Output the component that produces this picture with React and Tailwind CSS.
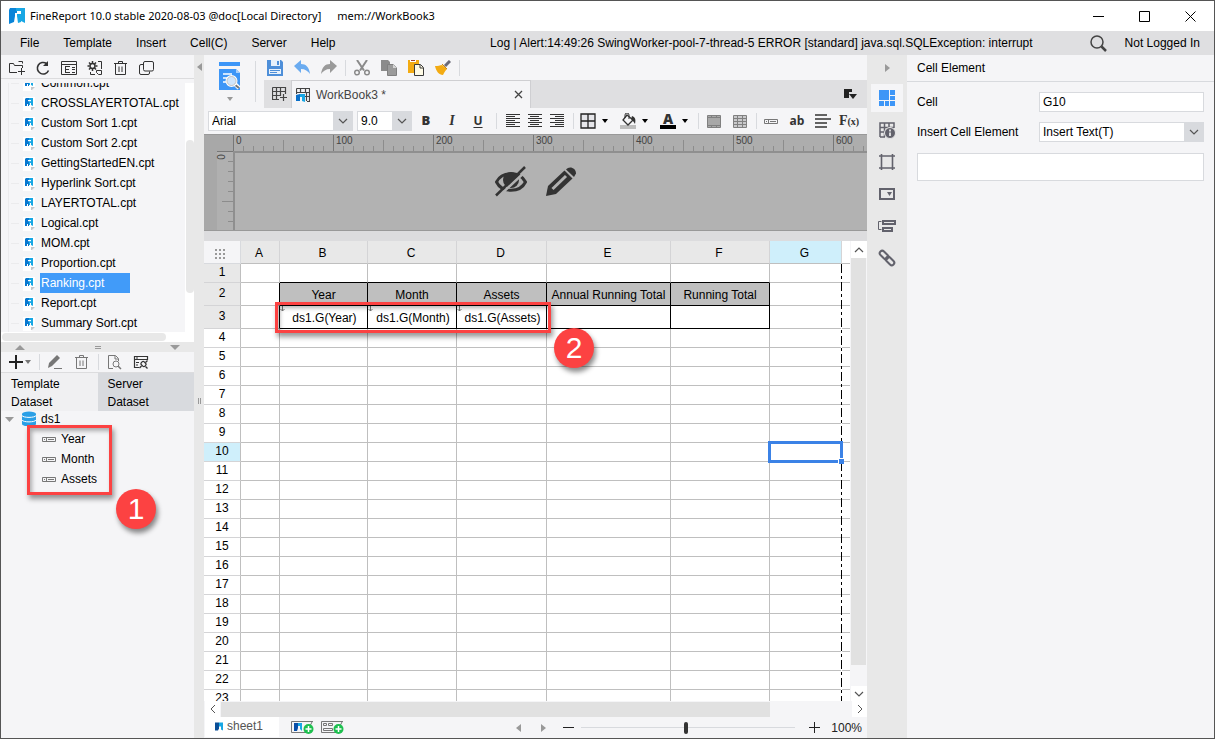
import React, { useState } from 'react'
import clsx from 'clsx'

const files = [
  'Common.cpt', 'CROSSLAYERTOTAL.cpt', 'Custom Sort 1.cpt', 'Custom Sort 2.cpt', 'GettingStartedEN.cpt',
  'Hyperlink Sort.cpt', 'LAYERTOTAL.cpt', 'Logical.cpt', 'MOM.cpt', 'Proportion.cpt', 'Ranking.cpt',
  'Report.cpt', 'Summary Sort.cpt',
]

const menus = ['File', 'Template', 'Insert', 'Cell(C)', 'Server', 'Help']
const columns = ['A', 'B', 'C', 'D', 'E', 'F', 'G']
const rows = Array.from({ length: 23 }, (_, i) => i + 1)

const cells = {
  B2: 'Year', C2: 'Month', D2: 'Assets', E2: 'Annual Running Total', F2: 'Running Total',
  B3: 'ds1.G(Year)', C3: 'ds1.G(Month)', D3: 'ds1.G(Assets)',
}

function Icon({ size = 16, label, className, children }) {
  return (
    <svg
      width={size}
      height={size}
      viewBox={`0 0 ${size} ${size}`}
      fill="none"
      stroke="currentColor"
      className={clsx('shrink-0', className)}
      role={label ? 'img' : undefined}
      aria-label={label}
      aria-hidden={label ? undefined : true}
    >
      {children}
    </svg>
  )
}

function IconButton({ label, className, children }) {
  return (
    <button type="button" aria-label={label} className={clsx('flex shrink-0 items-center', className)}>
      {children}
    </button>
  )
}

/* ---------- icons ---------- */

const Logo = () => (
  <Icon size={18}>
    <path d="M2 1h7v5H7v3l-1 6-5 2V3z" fill="#0a84d8" stroke="none" />
    <path d="M8 1h9v15l-4-2V9H9V7h4V4H8z" fill="#18a7e4" stroke="none" />
    <path d="M9 4h4v3H9z" fill="#fff" stroke="none" />
    <path d="M9 9h4v6l-3 1z" fill="#18a7e4" stroke="none" />
  </Icon>
)
const FileIcon = () => (
  <svg width="12" height="14" viewBox="0 0 12 14" className="mt-0.5 shrink-0" aria-hidden="true">
    <path d="M0 0h12v10l-4 4H0z" fill="#fff" />
    <path d="M12 10l-3 3H8v-3z" fill="#c4c6ca" />
    <path d="M3 1h3v8H5V7H4v2H2V2z" fill="#0878d0" />
    <path d="M6 1h4v8L8 8V6H7v2H6z" fill="#18a7e4" />
    <path d="M5 3h3v1.200H5z" fill="#fff" />
  </svg>
)
const FolderPlus = () => (
  <Icon>
    <path d="M8 12.500H.5v-9h4l1 2h8V8M9.500 1.500h4v2M12.500 8v7M9 11.500h7" />
  </Icon>
)
const Refresh = () => (
  <Icon>
    <path d="M13.500 10.500A5.800 5.800 0 1 1 11.500 3.500" strokeWidth="1.600" />
    <path d="M13 1v5H8z" fill="currentColor" stroke="none" />
  </Icon>
)
const Layout = () => (
  <Icon>
    <path d="M.5 1.500h15v13H.5zM.5 4.500h15M4.500 6v7M5 6.500h4M5 9.500h3M5 12.500h4M11 7.500h3M11 9.500h3M11 12.500h3" />
  </Icon>
)
const GearCopy = () => (
  <Icon>
    <circle cx="5.500" cy="6" r="2.500" strokeWidth="1.500" />
    <path d="M5.500 1v2M5.500 9v2M.5 6h2M8.500 6h2M2 2.500l1.500 1.500M7.500 8L9 9.500M9 2.500L7.500 4M3.500 8L2 9.500" strokeWidth="1.500" />
    <path d="M11 1.500h3.500V9M3.500 12v2.500H8M9.500 10.500h5v4h-3l-2-2z" />
  </Icon>
)
const Trash = () => (
  <Icon>
    <path d="M1 3.500h13M5.500 3V1.500h4V3M2.500 4v10.500h10V4M6 6.500v5.500M9 6.500v5.500" />
  </Icon>
)
const Copy = () => (
  <Icon>
    <rect x="4.500" y="1.500" width="10" height="9.500" rx="1.500" />
    <path d="M4 4.500H2A1.500 1.500 0 0 0 .5 6v7A1.500 1.500 0 0 0 2 14.500h7a1.500 1.500 0 0 0 1.500-1.500v-1.500" />
  </Icon>
)
const Preview = () => (
  <svg width="22" height="29" viewBox="0 0 22 29" aria-hidden="true">
    <path d="M0 0h21v4H0z" fill="#3d96f7" />
    <path d="M0 7h17l4 4v17H0z" fill="#3d96f7" />
    <path d="M17 7v4h4z" fill="#a9d0fb" />
    <path d="M4 12h9M4 16h4M4 20h3" stroke="#fff" strokeWidth="1.500" />
    <path d="M16 22l4 4" stroke="#fff" strokeWidth="4" />
    <path d="M15 22l5 4" stroke="#777" strokeWidth="2" />
    <circle cx="12.500" cy="19" r="5" fill="#cfe5fc" stroke="#fff" strokeWidth="2" />
    <circle cx="12.500" cy="19" r="4.500" fill="none" stroke="#999" strokeWidth=".6" />
  </svg>
)
const Save = () => (
  <Icon>
    <path d="M0 0h14l2 2v14H0z" fill="#4e8fd9" stroke="none" />
    <path d="M4 0h9v6H4z" fill="#e8f1fb" stroke="none" />
    <path d="M10 1h2v4h-2z" fill="#4e8fd9" stroke="none" />
    <path d="M2 9h12v5H2z" fill="#e8f1fb" stroke="none" />
    <path d="M3 10.500h10M3 12.500h7" stroke="#4e8fd9" />
  </Icon>
)
const Undo = () => (
  <Icon className="text-[#6aabf0]">
    <path d="M0 6l7-6v4c5 0 8 3 9 10-2-3-5-5-9-5v4z" fill="currentColor" stroke="none" />
  </Icon>
)
const Redo = () => (
  <Icon className="text-[#9a9a9a]">
    <path d="M16 6L9 0v4C4 4 1 7 0 14c2-3 5-5 9-5v4z" fill="currentColor" stroke="none" />
  </Icon>
)
const Cut = () => (
  <Icon className="text-[#8a8a8a]">
    <path d="M3 0l7 10.500M13 0L6 10.500" strokeWidth="2" />
    <circle cx="3" cy="12.500" r="2.300" strokeWidth="1.500" />
    <circle cx="13" cy="12.500" r="2.300" strokeWidth="1.500" />
  </Icon>
)
const CopyFill = () => (
  <Icon>
    <path d="M0 0h7l2 2v9H0z" fill="#8b8b8b" stroke="none" />
    <path d="M6.500 4.500h6l3 3v8h-9z" fill="#9b9b9b" stroke="#808080" />
    <path d="M12 4v4h4z" fill="#d5d5d5" stroke="none" />
  </Icon>
)
const Paste = () => (
  <Icon>
    <path d="M0 0h11v13H0z" fill="#f3ab12" stroke="none" />
    <path d="M2 0h6v2H2z" fill="#fff" stroke="none" />
    <path d="M3 0h4v1H3z" fill="#a04030" stroke="none" />
    <path d="M6.500 4.500h6l3 3v8h-9z" fill="#fffbe6" stroke="#3b3b3b" />
    <path d="M12 5v3h3" stroke="#3b3b3b" />
  </Icon>
)
const Brush = () => (
  <Icon>
    <path d="M15 1l-5 5" stroke="#6a6a78" strokeWidth="3" />
    <path d="M0 6c3 0 5-.5 7-1l5 4c-2 2-3 4-4 6-4 0-7-4-8-9z" fill="#f3ab12" stroke="none" />
    <path d="M7 4l5 5" stroke="#c98412" />
  </Icon>
)
const GridPlus = () => (
  <Icon>
    <path d="M.5 1.500h13V8M.5 1.500v12H7M0 5.500h13.500M0 9.500h8M4.500 1v12.500M8.500 1v9M11.500 8v7M8 11.500h7" strokeWidth="1.200" />
  </Icon>
)
const GridLogo = () => (
  <Icon size={14}>
    <path d="M.5.5h13v13H11M.5.5V6M0 4.500h13.500M9 8.500h4.500M4.500 0v5M9.500 0v5M10.500 5v8" strokeWidth="1.200" />
    <path d="M0 7l4-1v7H0z" fill="#0a6fc8" stroke="none" />
    <path d="M4 6h5v8l-3-1V9H4z" fill="#18a7e4" stroke="none" />
  </Icon>
)
const Align = ({ side }) => (
  <Icon size={14} className="text-[#333]">
    {[1, 3, 5, 7, 9, 11, 13].map((y, i) => {
      const w = i % 2 ? 9 : 14
      const x = side === 'left' ? 0 : side === 'right' ? 14 - w : Math.floor((14 - w) / 2)
      return <path key={y} d={`M${x} ${y - 0.5}h${w}`} />
    })}
  </Icon>
)
const Borders = () => (
  <Icon className="text-[#222]">
    <path d="M1 1h14v14H1zM8 1v14M1 8h14" strokeWidth="1.300" fill="#e6e6ea" />
  </Icon>
)
const FillColor = () => (
  <Icon className="text-[#333]">
    <path d="M0 12h16v4H0z" fill="#bdbdbd" stroke="none" />
    <path d="M7 2l6 5-5 5-5-5z" fill="#f5f5f7" strokeWidth="1.300" />
    <path d="M5 5V2a2 2 0 0 1 4 0v4" />
    <path d="M12 3c3 1 4 3 3 8-1-2-2-3-4-5z" fill="currentColor" stroke="none" />
  </Icon>
)
const Merge = ({ split }) => (
  <Icon size={14} className="text-[#808080]">
    <path d="M.5 1.500h13v12H.5z" fill={split ? '#c9c9cb' : '#a8a8a8'} />
    <path d={split ? 'M.5 4.500h13M.5 7.500h13M.5 10.500h13M4.500 1v12M9.500 1v12' : 'M.5 3.500h13M.5 11.500h13M4.500 1v3M9.500 1v3M4.500 11v3M9.500 11v3'} />
  </Icon>
)
const Field = ({ className }) => (
  <svg width="14" height="7" viewBox="0 0 14 7" fill="none" stroke="#777" className={clsx('shrink-0', className)} aria-hidden="true">
    <path d="M.5 1.500h13v4H.5zM4.500 1v5M6 3.500h6M2 3.500h1" />
  </svg>
)
const Caret = ({ className }) => (
  <svg width="6" height="4" viewBox="0 0 6 4" className={clsx('shrink-0', className)} aria-hidden="true">
    <path d="M0 0h6L3 4z" fill="currentColor" />
  </svg>
)
const Chevron = ({ d = 'M1 1l4 4 4-4', className }) => (
  <svg width="10" height="6" viewBox="0 0 10 6" fill="none" stroke="#555" strokeWidth="1.200" className={className} aria-hidden="true">
    <path d={d} />
  </svg>
)
const Side = ({ dir }) => (
  <svg width="5" height="8" viewBox="0 0 5 8" aria-hidden="true">
    <path d={dir === 'left' ? 'M5 0v8L0 4z' : 'M0 0v8l5-4z'} fill="#999" />
  </svg>
)

const railIcons = [
  { label: 'Cell Element', art: <path d="M0 0h10v10H0zM11 0h5v5h-5zM11 6h5v4h-5zM0 11h5v5H0zM6 11h4v5H6zM11 11h5v5h-5z" fill="#3d96f7" stroke="none" /> },
  {
    label: 'Cell Attributes',
    art: (
      <>
        <path d="M1 15V1h14v5M1 5.500h14M1 10h5M5.500 1v14M10 1v5M1 15h5" strokeWidth="1.500" />
        <circle cx="11" cy="11" r="5.500" fill="#62626c" stroke="#e8e8e8" />
        <path d="M11 7.500v2M11 10.500V14" stroke="#fff" strokeWidth="1.500" />
      </>
    ),
  },
  { label: 'Float Element', art: <path d="M2.500 0v16M13.500 0v16M0 2h16M0 14h16" strokeWidth="1.600" /> },
  {
    label: 'Widget Settings',
    art: (
      <>
        <path d="M1 3h14v10H1z" strokeWidth="2" />
        <path d="M8 6h5l-2.500 4z" fill="#62626c" stroke="none" />
      </>
    ),
  },
  {
    label: 'Condition Attributes',
    art: (
      <>
        <path d="M2.500 3.500h-3v8h3" />
        <path d="M4 3h12v3H4zM4 10h9v3H4z" strokeWidth="2" />
      </>
    ),
  },
  {
    label: 'Hyperlink',
    art: (
      <>
        <rect x="0" y="2.500" width="10" height="5" rx="2.500" transform="rotate(45 5 5)" strokeWidth="2" />
        <rect x="6" y="8.500" width="10" height="5" rx="2.500" transform="rotate(45 11 11)" strokeWidth="2" />
      </>
    ),
  },
]

/* ---------- small controls ---------- */

function Combo({ id, label, value, className, options }) {
  return (
    <div className={clsx('relative h-5 shrink-0', className)}>
      <select
        id={id}
        aria-label={label}
        defaultValue={value}
        className="block h-5 w-full appearance-none rounded-none border border-[#d8dade] bg-white pl-[3px] pr-5 outline-none"
      >
        {options.map(o => <option key={o}>{o}</option>)}
      </select>
      <span className="pointer-events-none absolute inset-y-0 right-0 flex w-5 items-center justify-center bg-[#d8dade]">
        <Chevron />
      </span>
    </div>
  )
}

const Divider = ({ className }) => <span className={clsx('w-px shrink-0 bg-[#d8dade]', className)} />

function Callout({ className, children }) {
  return (
    <span className={clsx('absolute z-20 flex size-10 items-center justify-center rounded-full bg-[#fc4242] text-[30px] leading-none text-white shadow-[2px_4px_5px_rgba(0,0,0,0.45)]', className)}>
      {children}
    </span>
  )
}

const Highlight = ({ className }) => (
  <span className={clsx('pointer-events-none absolute z-10 border-3 border-[#fc4242] shadow-[2px_4px_5px_rgba(0,0,0,0.4),inset_2px_3px_4px_rgba(0,0,0,0.3)]', className)} />
)

/* ---------- left side ---------- */

function TemplateTree() {
  const [selected, setSelected] = useState('Ranking.cpt')

  return (
    <div className="mt-1 flex h-[249px] shrink-0 overflow-hidden">
      <ul className="-mt-2.5 ml-[7px] min-w-0 flex-1 border-l border-[#ebebed]">
        {files.map(name => (
          <li key={name} className="flex h-5 items-center">
            <span className="ml-0.5 mr-1 h-px w-2 bg-[#ebebed]" />
            <FileIcon />
            <button
              type="button"
              onClick={() => setSelected(name)}
              className={clsx('ml-[5px] h-5 whitespace-nowrap pl-px text-left', name === selected && 'w-[90px] bg-[#419bf9] text-white')}
            >
              {name}
            </button>
          </li>
        ))}
      </ul>
      <div className="w-[9px] shrink-0 bg-white pt-[57px]">
        <div className="ml-px h-[153px] rounded bg-[#e8e8e8]" />
      </div>
    </div>
  )
}

function Sidebar() {
  return (
    <aside className="flex w-[193px] shrink-0 flex-col bg-[#f5f5f7]">
      <div className="flex h-6 shrink-0 items-center gap-2.5 border-b border-[#dcdcde] pl-2 pt-0.5 text-[#333]">
        <IconButton label="New folder"><FolderPlus /></IconButton>
        <IconButton label="Refresh"><Refresh /></IconButton>
        <IconButton label="Show in explorer"><Layout /></IconButton>
        <IconButton label="Rename"><GearCopy /></IconButton>
        <IconButton label="Delete"><Trash /></IconButton>
        <IconButton label="Copy"><Copy /></IconButton>
      </div>

      <TemplateTree />
      <div className="flex h-2.5 shrink-0 bg-white pr-[9px] pt-px">
        <div className="mx-px h-2 w-[164px] rounded bg-[#e8e8e8]" />
      </div>

      <div className="flex h-2.5 shrink-0 items-center justify-between bg-[#e8e8e8] px-3.5 text-[#999]">
        <svg width="10" height="5" viewBox="0 0 10 5" aria-hidden="true"><path d="M0 5h10L5 0z" fill="currentColor" /></svg>
        <span className="h-[3px] w-1.5 border-y border-[#999]" />
        <svg width="10" height="5" viewBox="0 0 10 5" aria-hidden="true"><path d="M0 0h10L5 5z" fill="currentColor" /></svg>
      </div>

      <div className="flex h-[21px] shrink-0 items-center border-b border-[#dcdcde] pl-2 text-[#777]">
        <IconButton label="Add dataset" className="gap-0.5">
          <Icon size={14} className="text-[#222]"><path d="M7 0v14M0 7h14" strokeWidth="2" /></Icon>
          <Caret />
        </IconButton>
        <Divider className="ml-2 mr-2 h-4" />
        <IconButton label="Edit">
          <Icon><path d="M0 14l1-5 8-8 3 3-8 8z" fill="currentColor" stroke="none" /><path d="M6 14.500h8" /></Icon>
        </IconButton>
        <IconButton label="Remove" className="ml-2.5"><Trash /></IconButton>
        <Divider className="mx-2 h-4" />
        <IconButton label="Preview">
          <Icon>
            <path d="M6 14.500H1.500v-13h7l3 3V7M8 2v3h3" />
            <circle cx="9" cy="10" r="3" />
            <path d="M11 12l3 3" strokeWidth="1.500" />
          </Icon>
        </IconButton>
        <IconButton label="Connection" className="ml-2.5 text-[#333]">
          <Icon>
            <path d="M6 13.500H1.500v-11h13V6M1 5.500h13M3 8.500h3M3 11h2M3 4h2" strokeWidth="1.200" />
            <rect x="8" y="8" width="5" height="4" rx="1.500" transform="rotate(45 10.500 10)" strokeWidth="1.300" />
            <path d="M12.500 8.500l2-2M6.500 14l2-2M12.500 12.500l2 2" strokeWidth="1.300" />
          </Icon>
        </IconButton>
      </div>

      <div className="grid h-9 shrink-0 grid-cols-2 leading-[18px]">
        <button type="button" className="bg-[#f0f0f2] pl-2.5 pr-6 pt-0.5 text-left">Template Dataset</button>
        <button type="button" className="bg-[#d8dade] pl-2.5 pr-6 pt-0.5 text-left">Server Dataset</button>
      </div>

      <div className="relative flex-1">
        <ul>
          <li className="flex h-5 items-center pl-1">
            <svg width="9" height="5" viewBox="0 0 9 5" aria-hidden="true"><path d="M0 0h9L4.500 5z" fill="#999" /></svg>
            <Icon className="ml-[7px]">
              <path d="M1 3v10c0 3 14 3 14 0V3z" fill="#2b9fe6" stroke="none" />
              <ellipse cx="8" cy="3" rx="7" ry="2.500" fill="#2b9fe6" stroke="none" />
              <path d="M1 4.500c1 2.500 13 2.500 14 0M1 9c1 2.500 13 2.500 14 0" stroke="#fff" />
            </Icon>
            <span className="ml-1">ds1</span>
          </li>
          {['Year', 'Month', 'Assets'].map(f => (
            <li key={f} className="flex h-5 items-center gap-[5px] pl-[41px]">
              <Field />
              <span>{f}</span>
            </li>
          ))}
        </ul>
        <Highlight className="left-[26px] top-4 h-[70px] w-[85px]" />
        <Callout className="left-[115px] top-20">1</Callout>
      </div>
    </aside>
  )
}

/* ---------- centre ---------- */

function Toolbars() {
  return (
    <>
      <div className="flex h-[53px] shrink-0 bg-[#f5f5f7]">
        <button type="button" aria-label="Preview" className="flex w-[51px] shrink-0 flex-col items-center gap-1.5 pt-[7px] text-[#999]">
          <Preview />
          <Caret />
        </button>
        <Divider className="mr-2 mt-1.5 h-[41px]" />
        <div className="flex min-w-0 flex-1 flex-col">
          <div className="flex h-[25px] items-center gap-2 pl-[3px]">
            <div className="flex gap-[11px]">
              <IconButton label="Save"><Save /></IconButton>
              <IconButton label="Undo"><Undo /></IconButton>
              <IconButton label="Redo"><Redo /></IconButton>
            </div>
            <Divider className="h-4" />
            <div className="flex gap-[11px]">
              <IconButton label="Cut"><Cut /></IconButton>
              <IconButton label="Copy"><CopyFill /></IconButton>
              <IconButton label="Paste"><Paste /></IconButton>
              <IconButton label="Format painter"><Brush /></IconButton>
            </div>
            <Divider className="h-4" />
          </div>
          <div className="flex h-7 bg-[#dfdfe1] text-[#444]">
            <IconButton label="New template" className="w-[27px] pl-2"><GridPlus /></IconButton>
            <div className="flex w-60 items-center border-x border-t border-[#cfcfd2] bg-[#f5f5f7] pl-1 pr-[7px]">
              <GridLogo />
              <span className="ml-1.5 flex-1">WorkBook3 *</span>
              <IconButton label="Close tab">
                <Icon size={9}><path d="M1 1l7 7M8 1L1 8" strokeWidth="1.300" /></Icon>
              </IconButton>
            </div>
            <IconButton label="Tab list" className="ml-auto mr-2.5 text-[#222]">
              <Icon size={13}>
                <path d="M0 1h8v3H5v6H0z" fill="currentColor" stroke="none" />
                <path d="M5 6h8l-4 5z" fill="currentColor" stroke="none" />
              </Icon>
            </IconButton>
          </div>
        </div>
      </div>

      <div className="flex h-[26px] shrink-0 items-center bg-[#f5f5f7] pl-1 text-[#333]">
        <Combo label="Font family" value="Arial" options={['Arial', 'Tahoma', 'Verdana']} className="w-[145px] text-black" />
        <Combo label="Font size" value="9.0" options={['8.0', '9.0', '10.0', '11.0']} className="ml-1 w-[55px] text-black" />
        <div className="ml-px flex">
          <button type="button" className="w-[26px] font-['Open_Sans'] text-[13px] font-extrabold">B</button>
          <button type="button" className="w-[26px] font-['Liberation_Serif'] text-sm font-bold italic">I</button>
          <button type="button" className="w-[26px] font-['Open_Sans'] text-xs font-bold underline underline-offset-2">U</button>
        </div>
        <Divider className="mx-[5px] h-4" />
        <IconButton label="Align left" className="w-[22px] justify-center"><Align side="left" /></IconButton>
        <IconButton label="Align center" className="w-[22px] justify-center"><Align side="center" /></IconButton>
        <IconButton label="Align right" className="w-[22px] justify-center"><Align side="right" /></IconButton>
        <Divider className="mx-[5px] h-4" />
        <IconButton label="Borders" className="w-10 gap-1.5 pl-px text-black"><Borders /><Caret /></IconButton>
        <IconButton label="Fill color" className="w-10 gap-1.5 pl-px text-black"><FillColor /><Caret /></IconButton>
        <button type="button" aria-label="Font color" className="flex w-[38px] items-center gap-1.5 pl-px text-black">
          <span className="flex size-4 flex-col items-center border-b-4 border-black font-['Open_Sans'] text-sm font-extrabold leading-3 text-[#333]">A</span>
          <Caret />
        </button>
        <Divider className="ml-px mr-1 h-4" />
        <div className="flex gap-1">
          <IconButton label="Merge cells" className="w-[22px] justify-center"><Merge /></IconButton>
          <IconButton label="Split cells" className="w-[22px] justify-center"><Merge split /></IconButton>
        </div>
        <Divider className="mx-[5px] h-4" />
        <div className="flex items-center gap-2">
          <IconButton label="Field" className="w-[18px] justify-center"><Field /></IconButton>
          <button type="button" className="w-[18px] font-['Open_Sans'] text-xs font-bold">ab</button>
          <IconButton label="Rich text" className="w-[18px] justify-center">
            <Icon><path d="M0 2h12M0 6h16M0 10h12M0 14h12" strokeWidth="1.500" /></Icon>
          </IconButton>
          <button type="button" className="flex w-[18px] items-baseline justify-center font-['Liberation_Serif'] text-sm font-bold">
            F<span className="text-[10px]">(x)</span>
          </button>
        </div>
      </div>
    </>
  )
}

function Ruler() {
  return (
    <div className="relative flex h-[97px] shrink-0 flex-col overflow-hidden border-y border-[#999] bg-[#a8a8a8] text-[10px] leading-none text-[#444]">
      <div className="ml-[29px] flex h-4 shrink-0 overflow-hidden bg-[#adadad]">
        {[0, 100, 200, 300, 400, 500, 600].map(n => (
          <div key={n} className="relative h-4 w-[100px] shrink-0 border-l border-[#777] pl-0.5 pt-px">
            {n}
            <svg width="100" height="16" viewBox="0 0 100 16" stroke="#8c8c8c" className="absolute bottom-0 left-0" aria-hidden="true">
              {[10, 20, 30, 40, 50, 60, 70, 80, 90].map(x => (
                <path key={x} d={`M${x - 0.5} ${x === 50 ? 5 : 11}V16`} />
              ))}
            </svg>
          </div>
        ))}
      </div>
      <div className="flex min-h-0 flex-1 pl-[13px]">
        <div className="relative w-4 shrink-0 border-t border-[#777] bg-[#b0b0b0]">
          <span className="flex size-2.5 -rotate-90 items-center justify-center">0</span>
          <svg width="16" height="80" viewBox="0 0 16 80" stroke="#8c8c8c" className="absolute right-0 top-0" aria-hidden="true">
            {[10, 20, 30, 40, 50, 60, 70].map(y => (
              <path key={y} d={`M${y === 50 ? 5 : 11} ${y - 0.5}H16`} />
            ))}
          </svg>
        </div>
        <div className="flex-1 border-l-2 border-t-2 border-[#8f8f8f] bg-[#b2b2b2]" />
      </div>
      <div className="absolute inset-0 flex items-center justify-center gap-[18px] pb-0.5 text-[#333]">
        <Icon size={32} label="Hidden">
          <path d="M1.500 16C7 5 25 5 30.500 16 25 27 7 27 1.500 16z" strokeWidth="3" />
          <circle cx="16" cy="14" r="8" fill="currentColor" stroke="none" />
          <path d="M3 31L32 4" stroke="#b2b2b2" strokeWidth="2.500" />
          <path d="M1 29.500L30 1" strokeWidth="2.500" />
        </Icon>
        <Icon size={32} label="Edit">
          <path d="M1 30l2-10L19.500 4.500l8 8L11 28z" fill="currentColor" stroke="none" />
          <path d="M21 3.500c3-4 10-2 10 4l-2 3.500z" fill="currentColor" stroke="none" />
          <path d="M7.500 23L21 10" stroke="#b2b2b2" strokeWidth="3" />
        </Icon>
      </div>
    </div>
  )
}

function cellClass(col, row) {
  const inTable = col >= 'B' && col <= 'F'
  const right = (row === 2 || row === 3) && (inTable || col === 'A')
  const bottom = row <= 3 && inTable
  return clsx(
    'relative whitespace-nowrap border-b border-r p-0 text-center font-normal',
    right ? 'border-r-black' : 'border-r-[#bfbfbf]',
    bottom ? 'border-b-black' : 'border-b-[#bfbfbf]',
    row === 2 && inTable && 'bg-[#bfbfbf] pt-0.5',
    row === 3 && inTable && 'pl-0.5 pt-0.5',
  )
}

function Sheet() {
  const [active] = useState({ col: 'G', row: 10 })

  return (
    <div className="relative flex min-h-0 flex-1 bg-white">
      <div className="min-w-0 flex-1 overflow-hidden">
        <table className="w-full table-fixed border-separate border-spacing-0">
          <colgroup>
            <col className="w-[37px]" />
            <col className="w-[39px]" />
            <col className="w-[88px]" />
            <col className="w-[89px]" />
            <col className="w-[90px]" />
            <col className="w-[124px]" />
            <col className="w-[99px]" />
            <col className="w-[72px]" />
            <col />
          </colgroup>
          <thead>
            <tr className="h-[23px]">
              <th aria-label="Select all" className="border-b border-r border-[#d8dade] bg-[#f5f5f7] p-0">
                <Icon size={10} className="ml-[11px] mt-1 text-[#999]">
                  <path d="M0 1h10M0 5h10M0 9h10" strokeWidth="2" strokeDasharray="2 2" />
                </Icon>
              </th>
              {columns.map(c => (
                <th
                  key={c}
                  scope="col"
                  className={clsx('border-b border-r border-b-[#bfbfbf] border-r-[#d4d4d6] p-0 pr-0.5 pt-0.5 font-normal', c === active.col ? 'bg-[#cfeffb]' : 'bg-[#e8e8e8]')}
                >
                  {c}
                </th>
              ))}
              <td className="border-b border-[#bfbfbf] p-0" />
            </tr>
          </thead>
          <tbody>
            {rows.map(r => (
              <tr key={r} className={r === 2 || r === 3 ? 'h-[23px]' : 'h-[19px]'}>
                <th
                  scope="row"
                  className={clsx(
                    'border-b border-r border-b-[#d4d4d6] border-r-[#bfbfbf] p-0 pb-0.5 font-normal',
                    r === active.row ? 'bg-[#cfeffb]' : r <= 3 ? 'bg-[#e8e8e8]' : 'bg-white',
                  )}
                >
                  {r}
                </th>
                {columns.map(c => (
                  <td key={c} className={cellClass(c, r)}>
                    {cells[c + r]}
                    {r === 3 && cells[c + r] && (
                      <svg width="6" height="6" viewBox="0 0 6 6" fill="none" stroke="#777" className="absolute left-0 top-0" aria-hidden="true">
                        <path d="M2.500 0v5M.5 3l2 2 2-2" />
                      </svg>
                    )}
                    {c === active.col && r === active.row && (
                      <span className="absolute -inset-0.5 z-10 border-3 border-[#3b82e6]">
                        <span className="absolute -bottom-1 -right-1 size-1.5 border-l border-t border-white bg-[#3b82e6]" />
                      </span>
                    )}
                  </td>
                ))}
                <td className="border-b border-[#bfbfbf] p-0" />
              </tr>
            ))}
          </tbody>
        </table>
      </div>

      {/* page edge */}
      <span className="absolute bottom-0 left-[637px] top-[23px] w-px bg-[repeating-linear-gradient(to_bottom,#000_0_9px,#fff_9px_12px,#000_12px_15px,#fff_15px_18px)]" />

      <div className="flex w-[17px] shrink-0 flex-col bg-[#f5f5f7] pl-px">
        <IconButton label="Scroll up" className="h-[17px] justify-center bg-white"><Chevron d="M1 5l4-4 4 4" /></IconButton>
        <div className="flex-1"><div className="mr-px h-[95%] bg-[#e1e1e1]" /></div>
        <IconButton label="Scroll down" className="h-[15px] justify-center bg-white"><Chevron /></IconButton>
      </div>

      <Highlight className="left-[71px] top-[61px] h-[31px] w-[276px]" />
      <Callout className="left-[350px] top-[87px]">2</Callout>
    </div>
  )
}

const AddSheet = ({ kind }) => (
  <svg width="23" height="15" viewBox="0 0 23 15" fill="none" stroke="#777" aria-hidden="true">
    <path d="M22 1.500H.5v11H16M21.500 1l-2 4" />
    {kind === 'sheet' ? (
      <>
        <path d="M3 3h4v5l-1 3H3z" fill="#0a4fa8" stroke="none" />
        <path d="M7 3h4v8L9 9V6H7z" fill="#18a7e4" stroke="none" />
      </>
    ) : (
      <path d="M2.500 3.500h3v2h-3zM7.500 3.500h4v2h-4zM2.500 8.500h9v2h-9z" />
    )}
    <circle cx="17.500" cy="9" r="5" fill="#1dbf4f" stroke="none" />
    <path d="M17.500 6v6M14.500 9h6" stroke="#fff" strokeWidth="1.500" />
  </svg>
)

function SheetFooter() {
  return (
    <footer className="shrink-0 bg-[#f5f5f7]">
      <div className="flex h-4 items-stretch">
        <IconButton label="Scroll left" className="ml-px w-[15px] justify-center bg-white">
          <svg width="6" height="10" viewBox="0 0 6 10" fill="none" stroke="#555" aria-hidden="true"><path d="M5 1L1 5l4 4" /></svg>
        </IconButton>
        <div className="flex-1 pl-px pt-px"><div className="h-[15px] w-[87%] bg-[#e1e1e1]" /></div>
        <IconButton label="Scroll right" className="w-[15px] justify-center bg-white">
          <svg width="6" height="10" viewBox="0 0 6 10" fill="none" stroke="#555" aria-hidden="true"><path d="M1 1l4 4-4 4" /></svg>
        </IconButton>
      </div>
      <div className="flex h-[21px] items-center text-[#555]">
        <button type="button" className="ml-px flex h-5 w-[74px] items-center gap-1 self-start bg-white pb-0.5 pl-2.5">
          <Icon size={8} className="h-[9px]">
            <path d="M0 0h4v6l-1 2H0z" fill="#0a4f98" stroke="none" />
            <path d="M4 0h4v8L6 7V4H4z" fill="#18a7e4" stroke="none" />
          </Icon>
          sheet1
        </button>
        <IconButton label="Add sheet" className="ml-3"><AddSheet kind="sheet" /></IconButton>
        <IconButton label="Add form sheet" className="ml-[7px]"><AddSheet kind="form" /></IconButton>
        <div className="ml-auto flex items-center pr-[5px]">
          <IconButton label="Previous sheet"><Side dir="left" /></IconButton>
          <IconButton label="Next sheet" className="ml-5"><Side dir="right" /></IconButton>
          <IconButton label="Zoom out" className="ml-[17px] text-[#222]">
            <Icon size={11}><path d="M0 5.500h11" /></Icon>
          </IconButton>
          <input
            type="range"
            aria-label="Zoom"
            defaultValue="49"
            className="ml-[7px] h-3 w-[214px] appearance-none bg-[linear-gradient(#d8dade,#d8dade)] bg-[length:100%_1px] bg-center bg-no-repeat [&::-webkit-slider-thumb]:h-3 [&::-webkit-slider-thumb]:w-1 [&::-webkit-slider-thumb]:appearance-none [&::-webkit-slider-thumb]:rounded-[2px] [&::-webkit-slider-thumb]:bg-[#333]"
          />
          <IconButton label="Zoom in" className="ml-3.5 text-[#222]">
            <Icon size={11}><path d="M0 5.500h11M5.500 0v11" /></Icon>
          </IconButton>
          <span className="ml-[11px] text-[#222]">100%</span>
        </div>
      </div>
    </footer>
  )
}

/* ---------- right side ---------- */

function Rail() {
  return (
    <nav className="flex w-10 shrink-0 flex-col items-center gap-1 bg-[#e8e8e8]">
      <IconButton label="Collapse panel" className="h-[25px] w-8 justify-center"><Side dir="right" /></IconButton>
      {railIcons.map((item, i) => (
        <IconButton key={item.label} label={item.label} className={clsx('h-7 w-8 justify-center text-[#62626c]', i === 0 && 'bg-[#f5f5f7]')}>
          <Icon className="overflow-visible">{item.art}</Icon>
        </IconButton>
      ))}
    </nav>
  )
}

function CellPanel() {
  return (
    <section className="w-[307px] shrink-0 bg-[#f5f5f7]">
      <h2 className="flex h-[27px] items-center border-b border-[#d8dade] px-2.5">Cell Element</h2>
      <form className="px-2.5 pt-2.5">
        <div className="grid grid-cols-[122px_1fr] items-center gap-y-2.5">
          <label htmlFor="cell">Cell</label>
          <input id="cell" defaultValue="G10" className="h-5 min-w-0 border border-[#d8dade] bg-white px-[3px] outline-none" />
          <label htmlFor="element">Insert Cell Element</label>
          <Combo id="element" value="Insert Text(T)" options={['Insert Text(T)', 'Insert Formula', 'Insert Chart']} />
        </div>
        <input aria-label="Cell content" className="mt-[11px] block h-7 w-full border border-[#d8dade] bg-white px-1 outline-none" />
      </form>
    </section>
  )
}

export default function App() {
  return (
    <div className="flex h-screen flex-col overflow-hidden border border-[#555] bg-[#f5f5f7] font-['Liberation_Sans',Arial,sans-serif] text-xs text-black">
      <header className="flex h-[30px] shrink-0 items-center bg-white pl-[7px] font-['Noto_Sans',sans-serif] text-[11px]">
        <Logo />
        <span className="ml-1 whitespace-nowrap">FineReport 10.0 stable 2020-08-03 @doc[Local Directory]</span>
        <span className="ml-4 whitespace-nowrap">mem://WorkBook3</span>
        <div className="ml-auto flex items-center gap-[35px] pr-[18px]">
          <IconButton label="Minimize"><Icon size={11}><path d="M0 5.500h11" /></Icon></IconButton>
          <IconButton label="Maximize"><Icon size={11}><path d="M.5.5h10v10H.5z" /></Icon></IconButton>
          <IconButton label="Close"><Icon size={11}><path d="M.5.5l10 10M10.500.5l-10 10" /></Icon></IconButton>
        </div>
      </header>

      <div className="flex h-6 shrink-0 items-center bg-[#dfdfe1] pr-3.5">
        <nav className="flex pl-[7px]">
          {menus.map(m => (
            <button key={m} type="button" className="px-3">{m}</button>
          ))}
        </nav>
        <span className="ml-auto whitespace-nowrap">
          Log | Alert:14:49:26 SwingWorker-pool-7-thread-5 ERROR [standard] java.sql.SQLException: interrupt
        </span>
        <IconButton label="Search" className="ml-[57px] text-[#444]">
          <Icon size={17}><circle cx="7" cy="7" r="6" strokeWidth="1.500" /><path d="M11.500 11.500l4.500 4.500" strokeWidth="2.500" /></Icon>
        </IconButton>
        <a href="#login" className="ml-[18px] whitespace-nowrap">Not Logged In</a>
      </div>

      <div className="flex min-h-0 flex-1">
        <Sidebar />
        <div className="flex w-2.5 shrink-0 flex-col items-center bg-[#e8e8e8] pb-2 pt-2">
          <Side dir="left" />
          <span className="my-auto h-1.5 w-[3px] border-x border-[#999]" />
        </div>
        <main className="flex min-w-0 flex-1 flex-col">
          <Toolbars />
          <Ruler />
          <div className="h-2.5 shrink-0 bg-[#dcdcde]" />
          <Sheet />
          <SheetFooter />
        </main>
        <Rail />
        <CellPanel />
      </div>
    </div>
  )
}
